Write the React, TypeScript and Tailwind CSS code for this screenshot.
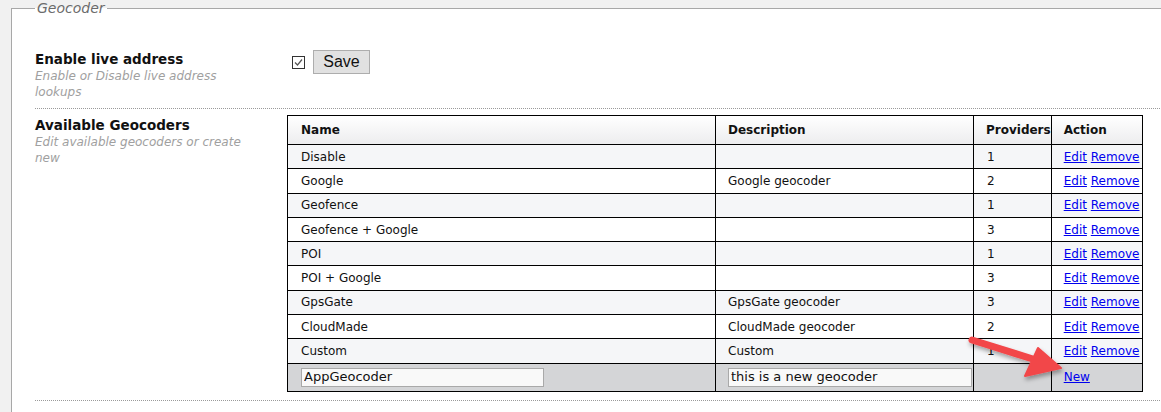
import React from "react";

type Geocoder = { name: string; description: string; providers: number };

const geocoders: Geocoder[] = [
  { name: "Disable", description: "", providers: 1 },
  { name: "Google", description: "Google geocoder", providers: 2 },
  { name: "Geofence", description: "", providers: 1 },
  { name: "Geofence + Google", description: "", providers: 3 },
  { name: "POI", description: "", providers: 1 },
  { name: "POI + Google", description: "", providers: 3 },
  { name: "GpsGate", description: "GpsGate geocoder", providers: 3 },
  { name: "CloudMade", description: "CloudMade geocoder", providers: 2 },
  { name: "Custom", description: "Custom", providers: 1 },
];

const font = { fontFamily: '"DejaVu Sans", Verdana, sans-serif' };

function SettingLabel({ title, hint }: { title: string; hint: string }) {
  return (
    <div className="w-[252px] shrink-0 pr-[30px]">
      <div className="text-[13.5px] font-bold leading-[18px] text-[#111]">{title}</div>
      <div className="w-[215px] text-[12px] italic leading-[16px] text-[#a0a0a0]">{hint}</div>
    </div>
  );
}

function Arrow() {
  return (
    <svg className="pointer-events-none absolute left-[960px] top-[330px]" width="120" height="60" viewBox="0 0 120 60">
      <defs>
        <filter id="sh" x="-20%" y="-20%" width="140%" height="160%">
          <feDropShadow dx="1" dy="3" stdDeviation="2" floodColor="#000" floodOpacity="0.35" />
        </filter>
      </defs>
      <g filter="url(#sh)" fill="#f2474a" stroke="#f2474a">
        <line x1="12" y1="10" x2="76" y2="30" strokeWidth="7" strokeLinecap="round" />
        <polygon points="78,18 101,38 65,46" strokeWidth="2" strokeLinejoin="round" />
      </g>
    </svg>
  );
}

export default function App() {
  return (
    <div className="relative h-[412px] w-[1161px] overflow-hidden bg-[#f1f1f1]" style={font}>
      <fieldset className="ml-[11px] w-[1200px] border border-[#a8a8a8] bg-white pb-[20px] pl-[23px]">
        <legend className="px-[2px] text-[14px] italic leading-[16px] text-[#6b6b6b]">
          Geocoder
        </legend>

        <div className="flex pb-[8px] pt-[34px]">
          <SettingLabel title="Enable live address" hint="Enable or Disable live address lookups" />
          <div className="flex items-start pl-[5px]">
            <span className="mt-[6px] flex h-[13px] w-[13px] items-center justify-center border border-[#333] bg-white">
              <svg width="9" height="9" viewBox="0 0 9 9">
                <path d="M1 4.5 L3.5 7 L8 1.5" fill="none" stroke="#555" strokeWidth="1.2" />
              </svg>
            </span>
            <button
              className="ml-[8px] h-[24px] w-[57px] border border-[#adadad] bg-[#e1e1e1] text-[16px] leading-[20px] text-[#111]"
              style={{ fontFamily: '"Liberation Sans", Arial, sans-serif' }}
            >
              Save
            </button>
          </div>
        </div>

        <div className="border-t border-dotted border-[#9a9a9a]" />

        <div className="flex pb-[8px] pt-[6px]">
          <div className="pt-[1px]">
            <SettingLabel title="Available Geocoders" hint="Edit available geocoders or create new" />
          </div>
          <table className="table-fixed border-collapse border border-black text-[12px] text-[#111]">
            <colgroup>
              <col className="w-[428px]" />
              <col className="w-[258px]" />
              <col className="w-[77px]" />
              <col className="w-[91px]" />
            </colgroup>
            <thead>
              <tr className="h-[29px] bg-gradient-to-b from-white to-[#ececee] text-left">
                <th className="border border-black pl-[13px] font-bold">Name</th>
                <th className="border border-black pl-[12px] font-bold">Description</th>
                <th className="overflow-hidden whitespace-nowrap border border-black pl-[12px] font-bold">Providers</th>
                <th className="border border-black pl-[12px] font-bold">Action</th>
              </tr>
            </thead>
            <tbody>
              {geocoders.map((g, i) => (
                <tr key={g.name} className={`h-[24.3px] ${i % 2 === 0 ? "bg-[#f5f6f8]" : "bg-white"}`}>
                  <td className="border border-black pl-[13px]">{g.name}</td>
                  <td className="border border-black pl-[12px]">{g.description}</td>
                  <td className="border border-black pl-[13px]">{g.providers}</td>
                  <td className="overflow-hidden whitespace-nowrap border border-black pl-[12px]">
                    <a className="text-[#0000ee] underline" href="#">Edit</a>{" "}
                    <a className="text-[#0000ee] underline" href="#">Remove</a>
                  </td>
                </tr>
              ))}
              <tr className="h-[28px] bg-[#d4d5d7]">
                <td className="border border-black pl-[13px]">
                  <input
                    className="h-[19px] w-[243px] border border-[#a9a9a9] bg-[#f9f9f9] px-[2px] text-[13px] text-[#111] outline-none"
                    defaultValue="AppGeocoder"
                  />
                </td>
                <td className="border border-black pl-[12px]">
                  <input
                    className="h-[19px] w-[244px] border border-[#a9a9a9] bg-[#f9f9f9] px-[2px] text-[13px] text-[#111] outline-none"
                    defaultValue="this is a new geocoder"
                  />
                </td>
                <td className="border border-black" />
                <td className="border border-black pl-[12px]">
                  <a className="text-[#0000ee] underline" href="#">New</a>
                </td>
              </tr>
            </tbody>
          </table>
        </div>

        <div className="border-t border-dotted border-[#9a9a9a]" />
      </fieldset>
      <Arrow />
    </div>
  );
}
